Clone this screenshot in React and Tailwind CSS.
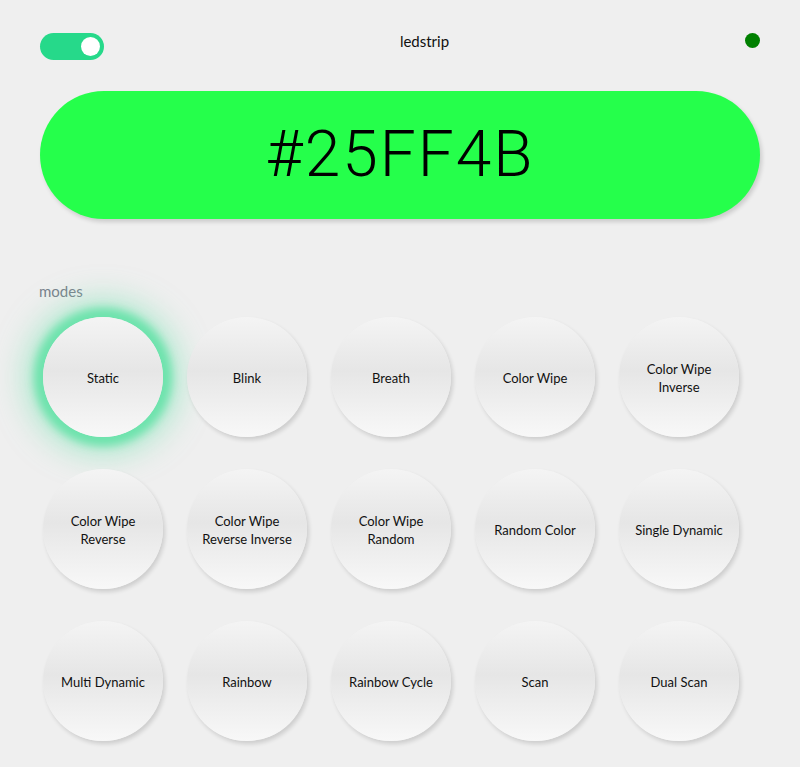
import React, { useState } from 'react';

const modes = [
  'Static', 'Blink', 'Breath', 'Color Wipe', 'Color Wipe Inverse',
  'Color Wipe Reverse', 'Color Wipe Reverse Inverse', 'Color Wipe Random', 'Random Color', 'Single Dynamic',
  'Multi Dynamic', 'Rainbow', 'Rainbow Cycle', 'Scan', 'Dual Scan',
];

export default function App() {
  const [on, setOn] = useState(true);
  const [mode, setMode] = useState('Static');

  return (
    <div className="min-h-[767px] w-[800px] bg-[#efefef] font-['Lato','Noto_Sans',sans-serif] text-[#111]">
      {/* header */}
      <div className="flex items-center justify-between px-10 pt-[33px]">
        <button
          onClick={() => setOn(!on)}
          className="flex h-[27px] w-[64px] items-center justify-end rounded-full bg-[#26d98a] pr-[4px]"
        >
          <span className="h-[19px] w-[19px] rounded-full bg-white" />
        </button>
        <span className="text-[15px] leading-none -mt-[10px]">ledstrip</span>
        <span className="h-[15px] w-[15px] rounded-full bg-[#008000] -mt-[12px]" />
      </div>

      {/* colour pill */}
      <div className="px-10 pt-[31px]">
        <div className="flex h-[128px] items-center justify-center rounded-full bg-[#25ff4b] shadow-[2px_3px_4px_rgba(0,0,0,0.15)]">
          <span className="font-['Roboto',sans-serif] text-[64px] font-light leading-none tracking-[2px] text-black">
            #25FF4B
          </span>
        </div>
      </div>

      {/* modes */}
      <div className="pl-[39px] pt-[65px] text-[15px] leading-none text-[#79818c]">modes</div>
      <div className="grid grid-cols-[repeat(5,120px)] gap-x-6 gap-y-8 pl-[43px] pt-[18px]">
        {modes.map((m) => (
          <button
            key={m}
            onClick={() => setMode(m)}
            className={`flex h-[120px] w-[120px] items-center justify-center rounded-full bg-[linear-gradient(180deg,#f4f4f4_0%,#e6e6e6_45%,#f8f8f8_100%)] px-3 pt-[2px] text-center text-[13px] leading-[18px] ${
              mode === m
                ? 'shadow-[0_0_8px_9px_#6ee3ad,0_0_30px_18px_rgba(110,227,173,0.5)]'
                : 'shadow-[2px_3px_4px_rgba(0,0,0,0.14)]'
            }`}
          >
            {m}
          </button>
        ))}
      </div>
    </div>
  );
}
